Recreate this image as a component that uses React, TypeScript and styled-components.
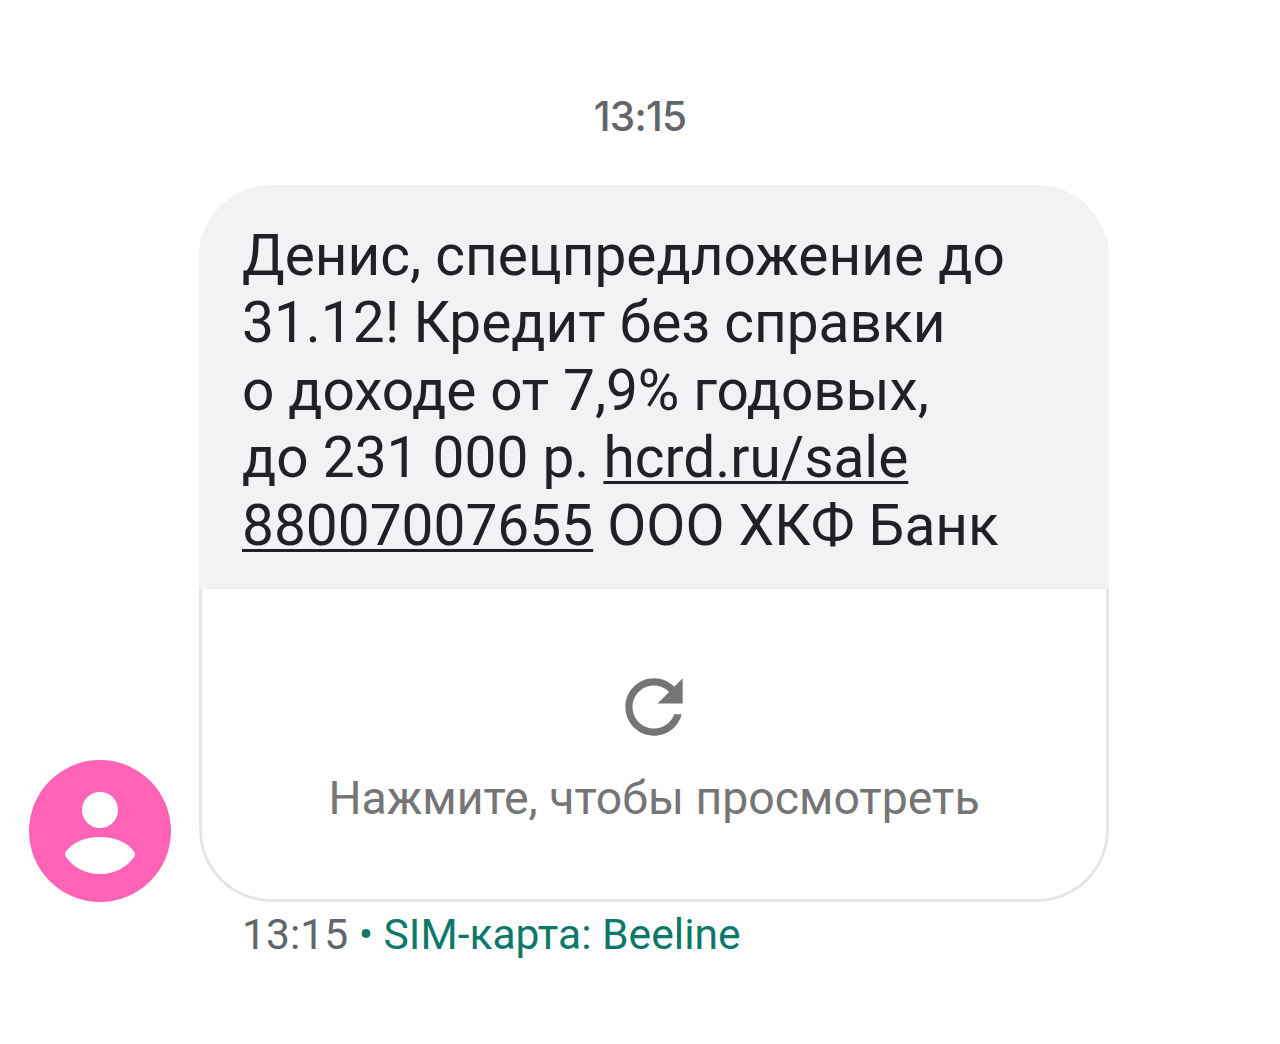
import styled, { createGlobalStyle } from "styled-components";

const GlobalStyle = createGlobalStyle`
  * {
    box-sizing: border-box;
  }
  body {
    margin: 0;
    background-color: #ffffff;
    font-family: Roboto, sans-serif;
  }
`;

const Conversation = styled.main`
  display: flex;
  flex-direction: column;
  width: 1280px;
  height: 1044px;
  overflow: hidden;
  background-color: #ffffff;
`;

const DayTime = styled.time`
  height: 48px;
  margin-top: 93px;
  color: #626569;
  font-family: Inter, Roboto, sans-serif;
  font-size: 40.5px;
  font-weight: 500;
  letter-spacing: -0.8px;
  line-height: 48px;
  text-align: center;
`;

const MessageRow = styled.div`
  display: flex;
  align-items: flex-end;
  gap: 28.5px;
  margin-top: 44px;
  padding-left: 28.5px;
`;

const Avatar = styled.div`
  flex: none;
  width: 142px;
  height: 142px;
  border-radius: 50%;
  background-color: #ff63b6;

  svg {
    display: block;
    width: 100%;
    height: 100%;
  }
`;

const Bubble = styled.article`
  width: 910px;
  height: 717px;
  overflow: hidden;
  border-radius: 72px;
`;

const MessageText = styled.div`
  height: 404px;
  padding: 37px 42px 0 43px;
  background-color: #f1f2f4;
  color: #202124;
  font-size: 56.8px;
  line-height: 67.4px;
`;

const Line = styled.div<{ $spacing?: string }>`
  letter-spacing: ${(props) => props.$spacing ?? "0"};
  white-space: pre;
`;

const MessageLink = styled.a`
  text-decoration: underline;
  text-decoration-skip-ink: none;
  text-decoration-thickness: 3px;
  text-underline-offset: 4px;
`;

const Attachment = styled.div`
  display: flex;
  flex-direction: column;
  align-items: center;
  height: 313px;
  padding-top: 75px;
  border: 3px solid #e5e5e5;
  border-top: none;
  border-radius: 0 0 72px 72px;
  color: #757575;

  svg {
    display: block;
    width: 86px;
    height: 86px;
  }
`;

const Hint = styled.p`
  margin: 21px 0 0;
  font-size: 46.4px;
  line-height: 54px;
`;

const Meta = styled.footer`
  display: flex;
  margin: 7px 0 0 242px;
  color: #626569;
  font-size: 42.6px;
  line-height: 50px;
  white-space: pre;
`;

const SimLabel = styled.span`
  color: #0c7869;
`;

export default function App() {
  return (
    <Conversation>
      <GlobalStyle />
      <DayTime>13:15</DayTime>
      <MessageRow>
        <Avatar>
          <svg viewBox="0 0 142 142" fill="#ffffff">
            <circle cx="71" cy="50" r="18" />
            <path d="M36.5 92C43 82.500 56 77 71 77S99 82.500 105.500 92Q106.500 94 105.500 96.500C98 107 86 114 71 114S44 107 36.500 96.500Q35.500 94 36.500 92Z" />
          </svg>
        </Avatar>
        <Bubble>
          <MessageText>
            <Line>Денис, спецпредложение до</Line>
            <Line>31.12! Кредит без справки</Line>
            <Line $spacing="-0.1px">о доходе от 7,9% годовых,</Line>
            <Line>
              до 231 000 р. <MessageLink>hcrd.ru/sale</MessageLink>
            </Line>
            <Line>
              <MessageLink>88007007655</MessageLink> ООО ХКФ Банк
            </Line>
          </MessageText>
          <Attachment>
            <svg viewBox="0 0 24 24" fill="currentColor">
              <path d="M17.65 6.35C16.2 4.9 14.21 4 12 4c-4.42 0-7.99 3.58-7.99 8s3.57 8 7.99 8c3.73 0 6.84-2.55 7.73-6h-2.08c-.82 2.33-3.04 4-5.65 4-3.31 0-6-2.69-6-6s2.69-6 6-6c1.66 0 3.14.69 4.22 1.78L13 11h7V4l-2.35 2.35z" />
            </svg>
            <Hint>Нажмите, чтобы просмотреть</Hint>
          </Attachment>
        </Bubble>
      </MessageRow>
      <Meta>
        <span>13:15</span>
        <SimLabel> • SIM-карта: Beeline</SimLabel>
      </Meta>
    </Conversation>
  );
}
